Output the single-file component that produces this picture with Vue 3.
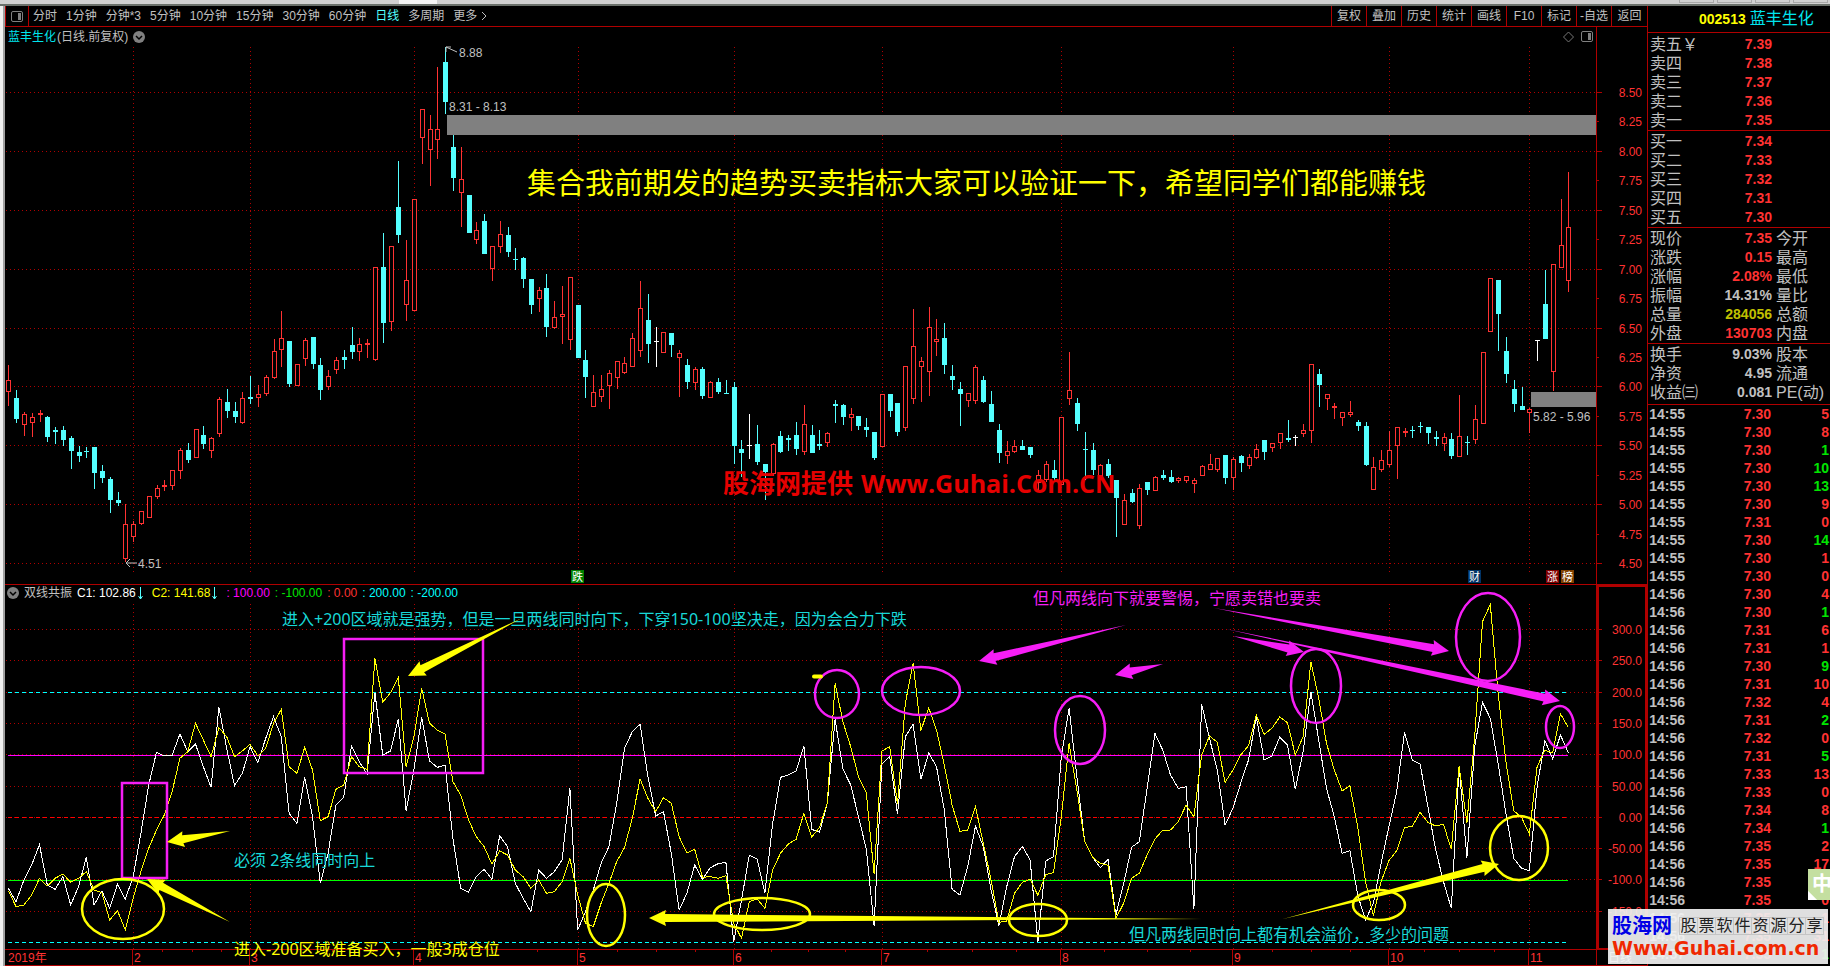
<script setup>
const periods = ['分时', '1分钟', '分钟*3', '5分钟', '10分钟', '15分钟', '30分钟', '60分钟', '日线', '多周期', '更多']
const tools = ['复权', '叠加', '历史', '统计', '画线', 'F10', '标记', '-自选', '返回']

const sells = [['卖五', '7.39'], ['卖四', '7.38'], ['卖三', '7.37'], ['卖二', '7.36'], ['卖一', '7.35']]
const buys = [['买一', '7.34'], ['买二', '7.33'], ['买三', '7.32'], ['买四', '7.31'], ['买五', '7.30']]
const quotes = [
  ['现价', '7.35', 'red', '今开'],
  ['涨跌', '0.15', 'red', '最高'],
  ['涨幅', '2.08%', 'red', '最低'],
  ['振幅', '14.31%', 'grey', '量比'],
  ['总量', '284056', 'gold', '总额'],
  ['外盘', '130703', 'red', '内盘']
]
const basics = [
  ['换手', '9.03%', 'grey', '股本'],
  ['净资', '4.95', 'grey', '流通'],
  ['收益㈢', '0.081', 'grey', 'PE(动)']
]
// price, volume, side (s = sell, b = buy)
const ticks = `7.30 5 b|7.30 8 b|7.30 1 s|7.30 10 s|7.30 13 s|7.30 9 b|7.31 0 b|7.30 14 s|7.30 1 b|7.30 0 b|7.30 4 b|7.30 1 s|7.31 6 b|7.31 1 b|7.30 9 s|7.31 10 b|7.32 4 b|7.31 2 s|7.32 0 b|7.31 5 s|7.33 13 b|7.33 0 b|7.34 8 b|7.34 1 s|7.35 2 b|7.35 17 b|7.35 2 b|7.35 0 b|7.35 1 b|7.35 31 b|7.35 1 s`
  .split('|')
  .map((t, i) => {
    const [price, vol, side] = t.split(' ')
    return { time: i < 10 ? '14:55' : i < 30 ? '14:56' : '14:57', price, vol, side }
  })

// One entry per day: colour, high, body top, body bottom, low, in thirds of a chart unit below BASE
const BASE = 230
const rawCandles = `r 405 450 485 528|c 480 504 567 579|r 546 552 584 618|r 549 561 578 621|r 540 549 555 576|c 558 561 621 636|c 591 600 606 642|c 588 600 630 648|c 618 624 663 717|c 648 666 678 696|c 651 663 666 684|c 651 651 729 777|c 705 723 744 759|c 741 747 810 849|c 786 810 819 828|r 822 882 986 995|r 873 882 920 936|r 843 843 881 885|r 798 798 863 863|r 765 774 800 807|r 750 765 771 783|r 720 720 767 780|r 654 660 722 747|c 639 660 690 699|r 597 597 683 683|c 588 615 642 657|r 621 624 662 684|r 501 507 611 621|c 477 516 543 564|c 516 543 561 579|r 486 504 578 582|c 438 501 507 522|r 465 492 503 531|r 435 441 491 498|r 327 363 443 447|r 243 324 359 411|c 333 333 462 471|r 402 402 467 467|r 324 330 386 408|c 321 321 402 417|c 384 405 480 510|r 420 438 470 480|r 381 390 419 432|c 360 381 390 417|c 291 345 366 387|r 324 342 365 393|r 327 339 345 384|r 112 112 389 393|c 9 111 279 339|r 48 48 275 303|c -207 -69 15 39|r 30 151 224 273|r -92 -92 242 242|r -363 -363 -277 -198|r -345 -303 -241 -132|r -489 -303 -271 -213|c -549 -504 -384 -348|c -285 -249 -156 -117|r -249 -153 -112 -9|c -105 -105 9 9|r -24 0 29 42|c -48 -27 72 72|r 48 48 116 153|r -27 12 50 69|c -9 15 66 81|c 54 87 90 120|c 81 84 147 174|c 147 147 225 252|r 171 180 207 246|c 132 174 291 321|r 213 261 293 297|r 167 252 260 342|r 141 141 329 360|c 225 225 384 384|c 360 390 441 504|r 435 486 530 530|r 435 477 501 516|r 420 429 467 537|r 393 393 443 477|r 381 399 429 432|r 309 324 410 410|r 153 234 362 381|c 192 270 342 399|w 291 333 336 411|r 306 306 368 368|c 309 309 345 381|r 360 369 383 501|c 387 405 456 477|r 411 417 458 480|c 411 417 498 507|r 453 456 503 503|c 444 456 486 492|c 450 489 492 492|c 456 471 648 702|c 630 657 669 740|w 552 645 648 687|c 585 642 696 705|c 702 702 726 810|r 639 642 731 738|c 603 618 666 669|c 615 624 630 663|c 576 615 657 675|r 525 582 665 675|c 585 615 669 669|c 600 642 648 660|r 606 609 638 651|c 510 522 528 579|c 522 525 561 585|r 534 552 563 603|c 558 558 588 600|c 564 591 600 621|c 606 606 684 690|r 492 492 650 650|c 492 492 543 561|c 519 519 606 618|r 408 408 593 603|r 237 348 506 522|r 381 393 410 516|r 231 291 425 498|r 267 327 335 378|c 279 324 405 432|c 405 438 450 480|c 456 477 492 588|r 489 489 512 531|r 405 411 512 522|c 438 450 516 519|c 483 522 576 576|c 582 600 669 699|r 633 663 677 702|r 630 648 665 669|c 630 648 660 660|c 651 651 675 684|r 720 735 760 780|r 693 702 750 756|c 690 720 744 750|r 561 561 765 765|r 366 480 506 525|c 504 519 582 603|c 606 657 660 750|c 639 660 720 735|r 702 705 740 740|c 687 702 738 744|c 750 750 804 921|r 792 810 884 884|c 777 789 816 819|r 762 774 887 897|c 756 756 780 795|r 738 741 782 782|c 720 735 744 750|c 720 741 756 759|r 741 744 752 759|r 738 738 752 759|r 744 750 761 789|r 705 709 737 737|r 672 702 719 719|r 684 684 719 726|c 675 675 744 762|r 681 687 743 780|c 675 678 699 726|r 672 681 707 717|r 642 657 683 687|c 630 630 666 690|r 639 639 653 666|r 609 609 638 657|c 570 624 630 636|w 615 621 624 648|r 582 600 611 621|r 402 402 602 639|c 417 432 465 531|r 492 492 506 540|r 519 528 534 567|r 546 546 563 588|r 513 546 554 561|c 570 576 588 603|c 576 588 705 708|r 681 711 779 779|r 660 690 719 726|r 603 660 704 711|r 591 591 647 747|r 594 603 609 621|c 588 600 603 624|c 576 588 591 609|c 591 591 609 642|c 603 621 627 648|r 609 621 641 663|c 609 627 678 687|r 495 618 680 680|c 618 636 639 675|r 525 567 629 642|r 366 366 581 581|r 144 144 305 305|c 150 150 252 363|c 321 363 432 459|c 450 477 522 546|c 471 528 540 540|r 534 537 549 609|w 330 330 333 393|c 120 222 327 327|r 102 102 425 483|r -93 46 113 113|r -174 -9 152 186`
const dayX = i => 8.3 + 7.8 * i
const candles = rawCandles.split('|').map((s, i) => {
  const [c, ...v] = s.split(' ')
  const [high, top, bottom, low] = v.map(n => BASE + Math.round(n / 3))
  return { c, x: Math.round(dayX(i)), high, top, bottom: Math.max(bottom, top + 1), low }
})

const c1 = [955,995,930,885,824,945,958,920,1005,950,862,1005,963,1015,942,988,920,790,645,547,558,556,492,545,522,590,652,412,535,647,610,530,578,505,440,500,730,760,622,740,940,850,705,682,528,575,612,368,555,543,447,722,600,442,573,592,586,805,955,967,920,898,928,797,830,940,985,1025,900,925,905,870,655,1080,1025,960,880,830,700,535,485,463,620,738,725,850,1020,970,885,928,893,881,877,1115,990,855,867,970,760,622,615,603,527,778,787,700,448,597,645,740,838,1067,582,560,733,500,463,628,549,590,720,958,975,890,768,830,960,1067,950,860,829,870,1115,873,860,560,415,620,815,862,893,868,1035,940,832,815,655,490,540,615,655,650,1017,403,505,600,765,715,640,570,440,570,558,502,525,658,545,365,510,655,740,850,842,975,1050,1000,880,770,665,487,570,582,710,840,935,1015,590,863,530,397,445,580,730,865,895,902,650,512,566,495,548]
const c2 = [962,1010,1005,975,925,948,925,912,937,925,905,960,968,1050,1022,1080,985,905,835,780,735,665,565,545,460,510,560,473,500,560,543,523,558,535,460,418,590,610,532,600,752,740,658,645,560,590,598,265,397,368,322,590,500,355,460,480,492,635,675,750,800,830,882,843,855,900,920,955,930,970,965,935,865,975,1060,1070,1000,940,875,833,745,627,685,725,683,700,800,849,838,922,920,925,917,1060,1105,995,987,1015,900,850,822,808,730,802,772,700,340,455,530,620,668,913,543,530,703,400,280,482,413,480,585,705,784,780,710,820,930,1057,1053,970,937,928,976,914,908,740,520,660,815,862,880,886,1045,1000,925,910,855,807,781,780,755,705,740,555,498,517,637,600,555,527,436,493,475,441,458,555,500,275,385,520,600,663,647,770,935,1037,935,872,842,773,769,727,757,768,763,838,588,758,500,155,103,370,575,722,742,792,590,541,548,432,472]
const toPoints = a => a.map((v, i) => `${dayX(i).toFixed(1)},${(570 + v / 3).toFixed(1)}`).join(' ')

const prices = ['8.50', '8.25', '8.00', '7.75', '7.50', '7.25', '7.00', '6.75', '6.50', '6.25', '6.00', '5.75', '5.50', '5.25', '5.00', '4.75', '4.50']
  .map((t, i) => ({ t, y: Math.round(92 + i * 29.44), major: i % 2 === 0 }))
const levels = ['300.0', '250.0', '200.0', '150.0', '100.0', '50.00', '0.00', '-50.00', '-100.0', '-150.0']
  .map((t, i) => ({ t, y: Math.round(629 + i * 31.3) }))

const months = [
  { x: 133, t: '2' }, { x: 250, t: '3' }, { x: 414, t: '4' }, { x: 578, t: '5' }, { x: 734, t: '6' }, { x: 882, t: '7' },
  { x: 1061, t: '8' }, { x: 1233, t: '9' }, { x: 1389, t: '10' }, { x: 1529, t: '11' }
]
const minorTicks = months.slice(0, -1).flatMap((m, i) => [1, 2, 3].map(k => Math.round(m.x + ((months[i + 1].x - m.x) * k) / 4)))

const flags = [
  { x: 571, t: '跌', f: '#008000' }, { x: 1468, t: '财', f: '#003366' },
  { x: 1546, t: '涨', f: '#800000' }, { x: 1561, t: '榜', f: '#804000' }
]

// centre x, centre y, radius x, radius y, ink
const rings = [
  [123, 909, 41, 30, 'y'], [606, 915, 19, 31, 'y'], [762, 914, 48, 16, 'y'], [1038, 920, 29, 16, 'y'], [1379, 905, 26, 15, 'y'], [1519, 848, 29, 32, 'y'],
  [837, 694, 22, 24, 'm'], [921, 691, 39, 24, 'm'], [1080, 730, 25, 34, 'm'], [1316, 686, 25, 37, 'm'], [1488, 637, 32, 44, 'm'], [1560, 727, 14, 21, 'm']
]

function arrow(x1, y1, x2, y2, neck = 4) {
  const len = Math.hypot(x2 - x1, y2 - y1)
  const ux = (x2 - x1) / len
  const uy = (y2 - y1) / len
  const at = (d, o) => `${(x2 - ux * d - uy * o).toFixed(1)},${(y2 - uy * d + ux * o).toFixed(1)}`
  return [`${x1},${y1}`, at(16, neck), at(17, 8), at(0, 0), at(17, -8), at(16, -neck)].join(' ')
}
const arrows = [
  [arrow(522, 618, 408, 676), 'y'], [arrow(230, 831, 167, 842), 'y'], [arrow(230, 922, 147, 879), 'y'],
  [arrow(1202, 919, 649, 918), 'y'], [arrow(1283, 919, 1499, 864), 'y'],
  [arrow(1126, 625, 979, 661), 'm'], [arrow(1163, 664, 1115, 675), 'm'], [arrow(1214, 608, 1449, 651), 'm'],
  [arrow(1226, 629, 1560, 701), 'm'], [arrow(1233, 636, 1304, 652), 'm']
]
</script>

<template>
  <div class="app">
    <div class="strip"><i class="tab"></i><i class="slot"></i><i class="slot"></i><i class="slot"></i><i class="slot"></i></div>
    <div class="body">
      <div class="edge"></div>
      <main class="charts">
        <nav class="toolbar">
          <button class="dock" aria-label="面板">
            <svg width="12" height="11"><rect x="0.500" y="0.500" width="11" height="10" rx="1.500" fill="none" stroke="#808080" /><rect x="7" y="2" width="3" height="7" fill="#808080" /></svg>
          </button>
          <div class="periods">
            <button v-for="p in periods" :key="p" :class="{ on: p === '日线' }">{{ p }}<svg v-if="p === '更多'" class="chev" width="6" height="10"><path d="M1 1L5 5L1 9" fill="none" stroke="#c0c0c0" /></svg></button>
          </div>
          <div class="tools">
            <button v-for="t in tools" :key="t">{{ t }}</button>
          </div>
        </nav>

        <section class="panel">
          <header class="caption">
            <span class="name">蓝丰生化</span><span class="mode">(日线.前复权)</span>
            <svg class="gap" width="12" height="12"><circle cx="6" cy="6" r="6" fill="#808080" /><path d="M3 5L6 8L9 5" fill="none" stroke="#000" stroke-width="1.500" /></svg>
            <svg class="corner" width="30" height="12"><path d="M5.500 1L10.500 6L5.500 11L0.500 6Z" fill="none" stroke="#777" /><rect x="18.500" y="0.500" width="11" height="10" rx="1.500" fill="none" stroke="#808080" /><rect x="25" y="2" width="3" height="7" fill="#808080" /></svg>
          </header>
          <svg class="plot" viewBox="5 27 1642 558">
            <g class="grid">
              <line v-for="p in prices.filter(q => q.major)" :key="p.t" x1="6" x2="1596" :y1="p.y + 0.5" :y2="p.y + 0.5" />
              <line v-for="m in months" :key="m.t" :x1="m.x + 0.5" :x2="m.x + 0.5" y1="47" y2="573" />
            </g>
            <g class="frame">
              <line x1="1596.500" x2="1596.500" y1="27" y2="585" />
              <line v-for="p in prices" :key="p.t" x1="1597" :x2="p.major ? 1602 : 1599" :y1="p.y + 0.5" :y2="p.y + 0.5" />
              <line x1="5" x2="1647" y1="584.500" y2="584.500" />
            </g>
            <text v-for="p in prices" :key="p.t" class="scale" x="1642" :y="p.y + 5">{{ p.t }}</text>
            <rect x="447" y="115" width="1149" height="20" fill="#808080" />
            <rect x="1531" y="392" width="65" height="15" fill="#808080" />
            <g v-for="(k, i) in candles" :key="i" :class="['candle', k.c]">
              <rect :x="k.x" :y="k.high" width="1" :height="k.low - k.high" />
              <rect v-if="k.c === 'w'" :x="k.x - 2" :y="k.top" width="5" height="1" />
              <rect v-else :x="k.x - 2" :y="k.top" width="5" :height="k.bottom - k.top" />
              <rect v-if="k.c === 'r' && k.bottom - k.top > 2" class="hole" :x="k.x - 1" :y="k.top + 1" width="3" :height="k.bottom - k.top - 2" />
            </g>
            <g class="note">
              <path d="M446 52V47L457 52M446 47h5" /><text x="459" y="57">8.88</text>
              <text x="449" y="111">8.31 - 8.13</text>
              <path d="M126 563H137M130 559L126 563L130 567" /><text x="138" y="568">4.51</text>
              <text x="1533" y="421">5.82 - 5.96</text>
            </g>
            <text class="headline" x="527" y="194">集合我前期发的趋势买卖指标大家可以验证一下，希望同学们都能赚钱</text>
            <text class="mark cjk" x="723" y="493">股海网提供</text>
            <text class="mark" x="861" y="493">Www.Guhai.Com.CN</text>
            <g v-for="f in flags" :key="f.t">
              <rect :x="f.x" y="570" width="13" height="13" :fill="f.f" /><text class="flag" :x="f.x + 1" y="581">{{ f.t }}</text>
            </g>
          </svg>
        </section>

        <section class="panel">
          <header class="caption legend">
            <svg width="12" height="12"><circle cx="6" cy="6" r="6" fill="#808080" /><path d="M3 5L6 8L9 5" fill="none" stroke="#000" stroke-width="1.500" /></svg>
            <span class="title">双线共振</span>
            <span class="white last">C1:&nbsp;102.86<svg width="5" height="13"><path d="M2.500 0V12M0.500 9L2.500 12L4.500 9" fill="none" stroke="#54ffff" /></svg></span>
            <span class="yellow last">C2:&nbsp;141.68<svg width="5" height="13"><path d="M2.500 0V12M0.500 9L2.500 12L4.500 9" fill="none" stroke="#54ffff" /></svg></span>
            <span class="magenta">: 100.00</span><span class="green">: -100.00</span><span class="red">: 0.00</span><span class="cyan">: 200.00</span><span class="cyan">: -200.00</span>
          </header>
          <svg class="plot" viewBox="5 585 1642 381">
            <g class="grid">
              <line v-for="l in levels" :key="l.t" x1="6" x2="1596" :y1="l.y + 0.5" :y2="l.y + 0.5" />
              <line v-for="m in months" :key="m.t" :x1="m.x + 0.5" :x2="m.x + 0.5" y1="604" y2="949" />
            </g>
            <g class="frame">
              <line x1="1596.500" x2="1596.500" y1="585" y2="966" />
              <line v-for="l in levels" :key="l.t" x1="1597" x2="1602" :y1="l.y + 0.5" :y2="l.y + 0.5" />
              <line v-for="l in levels" :key="l.t + 'm'" x1="1597" x2="1599" :y1="l.y + 16.5" :y2="l.y + 16.5" />
              <rect x="1598" y="586" width="48" height="363" fill="none" stroke-width="2" />
              <line x1="5" x2="1597" y1="949.500" y2="949.500" />
              <line x1="5" x2="1647" y1="965.500" y2="965.500" />
              <line v-for="m in months" :key="m.t" :x1="m.x - 0.5" :x2="m.x - 0.5" y1="949" y2="966" />
              <line v-for="x in minorTicks" :key="x" :x1="x + 0.5" :x2="x + 0.5" y1="950" y2="952" />
            </g>
            <text v-for="l in levels" :key="l.t" class="scale" x="1642" :y="l.y + 5">{{ l.t }}</text>
            <text class="month" x="8" y="962">2019年</text>
            <text v-for="m in months" :key="m.t" class="month" :x="m.x + 1" y="962">{{ m.t }}</text>
            <text class="unit" x="1608" y="962">日线</text>

            <g class="refs">
              <line x1="8" x2="1566" y1="692.500" y2="692.500" stroke="#00ffff" stroke-dasharray="4 3" />
              <line x1="8" x2="1568" y1="755.500" y2="755.500" stroke="#ff00ff" />
              <line x1="8" x2="1566" y1="817.500" y2="817.500" stroke="#ff0000" stroke-dasharray="4 3" />
              <line x1="8" x2="1568" y1="880.500" y2="880.500" stroke="#00ff00" />
              <line x1="8" x2="1566" y1="942.500" y2="942.500" stroke="#00ffff" stroke-dasharray="4 3" />
              <polyline :points="toPoints(c1)" stroke="#fff" />
              <polyline :points="toPoints(c2)" stroke="#ff0" />
            </g>

            <g class="say">
              <text class="teal" x="282" y="625">进入+200区域就是强势，但是一旦两线同时向下，下穿150-100坚决走，因为会合力下跌</text>
              <text class="magenta" x="1033" y="604">但凡两线向下就要警惕，宁愿卖错也要卖</text>
              <text class="teal" x="234" y="866">必须 2条线同时向上</text>
              <text class="yellow" x="234" y="955">进入-200区域准备买入，一般3成仓位</text>
              <text class="teal" x="1129" y="940">但凡两线同时向上都有机会溢价，多少的问题</text>
            </g>
            <g class="ink">
              <rect class="m" x="344" y="639" width="139" height="134" />
              <rect class="m" x="122" y="783" width="45" height="95" />
              <ellipse v-for="(r, i) in rings" :key="i" :class="r[4]" :cx="r[0]" :cy="r[1]" :rx="r[2]" :ry="r[3]" />
              <path class="y" d="M814 676.500h7" stroke-width="4" stroke-linecap="round" />
            </g>
            <polygon v-for="(a, i) in arrows" :key="i" :points="a[0]" :class="['arrow', a[1]]" />
          </svg>
        </section>
      </main>

      <aside class="side">
        <h1><b>002513</b><span>蓝丰生化</span></h1>
        <table class="book sells"><tbody>
          <tr v-for="(s, i) in sells" :key="s[0]"><th scope="row">{{ s[0] }}<template v-if="i === 0">￥</template></th><td class="red">{{ s[1] }}</td><td></td></tr>
        </tbody></table>
        <table class="book"><tbody>
          <tr v-for="s in buys" :key="s[0]"><th scope="row">{{ s[0] }}</th><td class="red">{{ s[1] }}</td><td></td></tr>
        </tbody></table>
        <table class="book"><tbody>
          <tr v-for="q in quotes" :key="q[0]"><th scope="row">{{ q[0] }}</th><td :class="q[2]">{{ q[1] }}</td><th scope="row" class="second">{{ q[3] }}</th></tr>
        </tbody></table>
        <table class="book basics"><tbody>
          <tr v-for="q in basics" :key="q[0]"><th scope="row">{{ q[0] }}</th><td :class="q[2]">{{ q[1] }}</td><th scope="row" class="second">{{ q[3] }}</th></tr>
        </tbody></table>
        <table class="ticks"><tbody>
          <tr v-for="(t, i) in ticks" :key="i"><td class="time">{{ t.time }}</td><td class="red">{{ t.price }}</td><td :class="t.side === 's' ? 'green' : 'red'">{{ t.vol }}</td></tr>
        </tbody></table>
      </aside>
    </div>

    <div class="ime">中</div>
    <a class="brand" href="#">
      <span class="row"><b>股海网</b><span class="slogan"><i v-for="c in '股票软件资源分享'" :key="c">{{ c }}</i></span></span>
      <strong>Www.Guhai.com.cn</strong>
    </a>
  </div>
</template>

<style>
html, body { background: #000; overflow: hidden; }
</style>

<style scoped>
.app {
  position: relative;
  min-height: 100vh;
  background: #000;
  color: #c0c0c0;
  font: 12px/16px "Liberation Sans", "Noto Sans CJK SC", sans-serif;
}
.strip {
  display: flex;
  gap: 3px;
  height: 6px;
  box-sizing: border-box;
  padding-right: 2px;
  background: #d0d0d0;
  border-bottom: 2px solid #6a706a;
}
.tab { width: 38px; margin: 0 auto 0 399px; background: #f4f4f4; }
.slot { width: 33px; height: 2px; border: 1px solid #a8a8a8; border-top: 0; }
.body { display: flex; align-items: stretch; }
.edge { width: 5px; box-sizing: border-box; background: #f0f0f0; border-right: 2px solid #a0a0a0; }
.charts { flex: 1; min-width: 0; }

button {
  padding: 0;
  border: 0;
  background: none;
  color: #c0c0c0;
  font: inherit;
  white-space: nowrap;
}
.toolbar {
  display: flex;
  height: 21px;
  box-sizing: border-box;
  border-left: 1px solid #b00000;
  border-bottom: 1px solid #b00000;
}
.dock { display: flex; align-items: center; justify-content: center; width: 23px; border-right: 1px solid #b00000; }
.periods { display: flex; gap: 9px; padding-left: 4px; }
.periods .on { color: #54ffff; }
.chev { margin-left: 4px; vertical-align: -1px; }
.tools { display: flex; margin-left: auto; }
.tools button { width: 35px; border-left: 1px solid #b00000; }
.tools button:last-child { width: 36px; }

.panel { position: relative; }
.plot { display: block; width: 100%; height: auto; }
.caption {
  position: absolute;
  z-index: 1;
  left: 3px;
  right: 54px;
  top: 2px;
  display: flex;
  align-items: center;
  line-height: 16px;
}
.caption .name { color: #00e5ee; }
.mode { margin-left: 1px; }
.gap { margin-left: 5px; }
.corner { margin-left: auto; }
.legend { left: 2px; top: 0; gap: 5px; }
.legend span svg { margin-left: 2px; vertical-align: -3px; }
.legend .last { margin-right: 4px; }

.white { color: #fff; }
.yellow { color: #ff0; fill: #ff0; }
.magenta { color: #f0f; fill: #f61ef6; }
.green { color: #00e600; }
.red { color: #ff3232; }
.cyan { color: #00ffff; }
.grey { color: #c0c0c0; }
.gold { color: #c0c000; }
.teal { fill: #18d8d8; }

.grid line { stroke: #b00000; stroke-dasharray: 1 3; shape-rendering: crispEdges; }
.frame { stroke: #b00000; shape-rendering: crispEdges; }
.scale { fill: #ff3232; text-anchor: end; font-size: 12px; }
.month { fill: #ff3232; font-size: 12px; }
.unit { fill: #fff; font-size: 12px; }
.candle { shape-rendering: crispEdges; }
.candle.r { fill: #ff3232; }
.candle.c { fill: #54ffff; }
.candle.w { fill: #fff; }
.candle .hole { fill: #000; }
.note text { fill: #c0c0c0; font-size: 12px; }
.note path { fill: none; stroke: #c0c0c0; }
.headline { fill: #ff0; font: 29px "Noto Sans CJK SC", sans-serif; }
.mark { fill: #e60000; font: bold 25px "Open Sans", "Noto Sans CJK SC", sans-serif; }
.mark.cjk { font-size: 26px; }
.flag { fill: #fff; font-size: 11px; }
.refs { fill: none; shape-rendering: crispEdges; }
.say { font: 16px "Noto Sans", "Noto Sans CJK SC", sans-serif; }
.ink { fill: none; stroke-width: 2.5; }
.ink .m { stroke: #f61ef6; }
.ink .y { stroke: #ff0; }
.arrow.m { fill: #f61ef6; }
.arrow.y { fill: #ff0; }

.side { width: 183px; box-sizing: border-box; border-left: 1px solid #b00000; }
h1 {
  display: flex;
  align-items: center;
  gap: 4px;
  height: 27px;
  box-sizing: border-box;
  margin: 0;
  padding-left: 51px;
  border-bottom: 1px solid #b00000;
  font-size: 16px;
  font-weight: 400;
  color: #00e5ee;
}
h1 b { color: #ff0; font-size: 14px; }
table { width: 100%; table-layout: fixed; border-spacing: 0; }
.book { padding: 1px 0 0; border-bottom: 1px solid #b00000; }
.sells { padding-top: 2px; }
.basics { padding-bottom: 2px; }
.book tr { height: 19px; }
.book th, .book td { padding: 0; line-height: 19px; vertical-align: middle; white-space: nowrap; }
.book th { width: 48px; padding-left: 2px; text-align: left; font-size: 16px; font-weight: 400; }
.book td { width: 74px; text-align: right; font-size: 14px; font-weight: 700; }
.book td:last-child, .book .second { width: auto; padding-left: 4px; }
.ticks tr { height: 18px; }
.ticks td { padding: 0; line-height: 18px; text-align: right; font-size: 14px; font-weight: 700; }
.ticks td:nth-child(2) { width: 86px; }
.ticks td:last-child { padding-right: 1px; }
.ticks .time { width: 37px; }

.ime {
  position: absolute;
  right: 0;
  top: 869px;
  width: 18px;
  padding-left: 4px;
  overflow: hidden;
  background: linear-gradient(45deg, #fff 0 6px, #c4dfa0 7px);
  color: #fff;
  font-size: 20px;
  font-weight: 700;
  line-height: 31px;
}
.brand {
  position: absolute;
  right: 2px;
  top: 909px;
  width: 220px;
  height: 55px;
  box-sizing: border-box;
  padding: 5px 4px;
  background: rgba(240, 240, 240, 0.93);
  text-decoration: none;
  white-space: nowrap;
}
.row { display: flex; align-items: center; justify-content: space-between; height: 23px; }
.row b { color: #0000e6; font-size: 20px; }
.slogan { display: flex; border: 1px solid #c4c4c4; }
.slogan i { width: 17px; color: #222; font-size: 16px; font-style: normal; line-height: 16px; text-align: center; border-right: 1px solid #c4c4c4; }
.slogan i:last-child { border: 0; }
.brand strong { display: block; color: #f02800; font: bold 19px/23px "DejaVu Sans", sans-serif; }
</style>
